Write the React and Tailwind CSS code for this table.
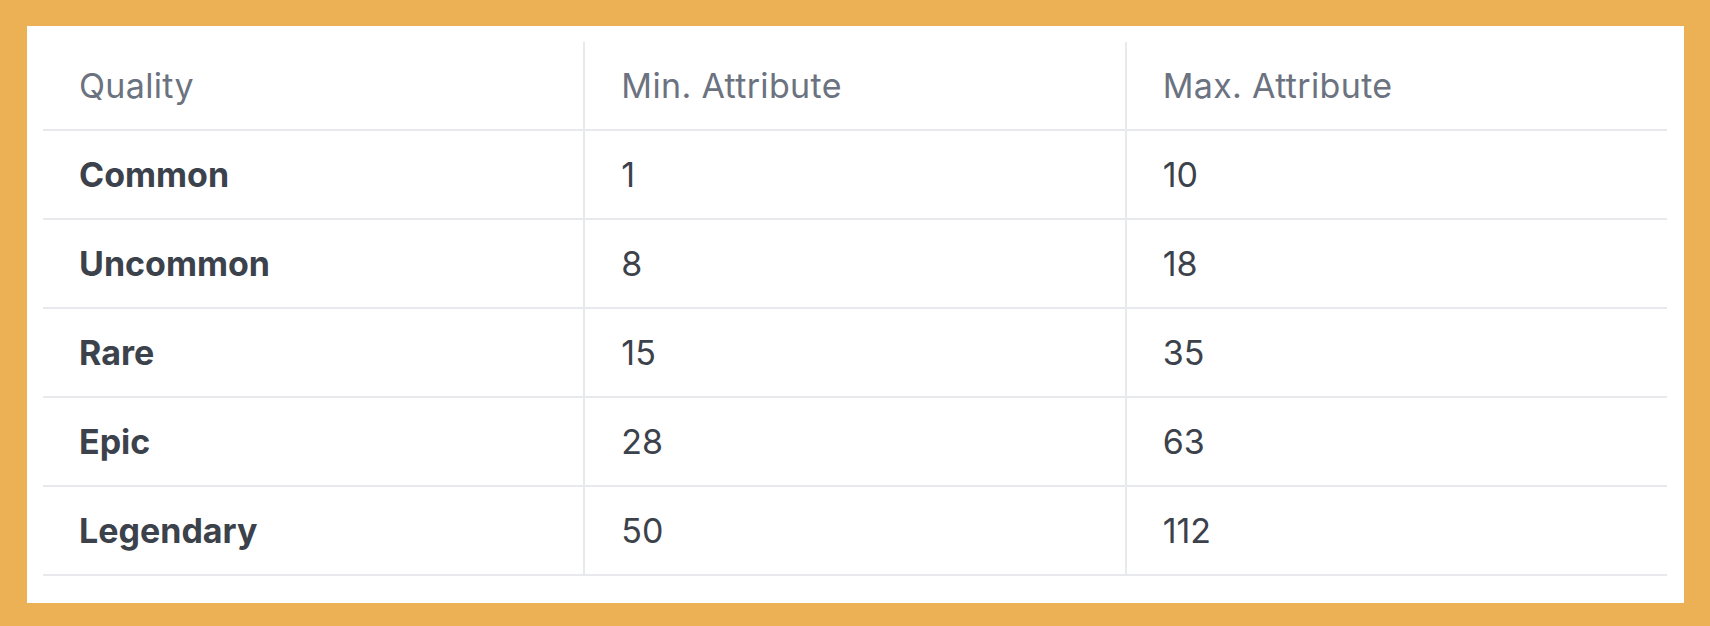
const rows = [
  { quality: 'Common', min: '1', max: '10' },
  { quality: 'Uncommon', min: '8', max: '18' },
  { quality: 'Rare', min: '15', max: '35' },
  { quality: 'Epic', min: '28', max: '63' },
  { quality: 'Legendary', min: '50', max: '112' },
];

export default function App() {
  return (
    <div className="w-[1710px] h-[626px] bg-[#edb155] pl-[27px] pt-[26px] font-['Inter',sans-serif]">
      <div className="w-[1657px] h-[577px] bg-white pl-[16px] pt-[16px] pr-[17px]">
        <table className="w-full border-collapse table-fixed">
          <thead>
            <tr className="h-[88px] border-b-2 border-[#e8e9ed]">
              <th className="text-left font-normal text-[34px] text-[#6b7280] pl-[36px] tracking-[0.01em]">Quality</th>
              <th className="text-left font-normal text-[34px] text-[#6b7280] pl-[36px] border-l-2 border-[#e8e9ed] tracking-[0.01em]">Min. Attribute</th>
              <th className="text-left font-normal text-[34px] text-[#6b7280] pl-[36px] border-l-2 border-[#e8e9ed] tracking-[0.01em]">Max. Attribute</th>
            </tr>
          </thead>
          <tbody>
            {rows.map((r) => (
              <tr key={r.quality} className="h-[89px] border-b-2 border-[#e8e9ed]">
                <td className="pl-[36px] text-[34px] font-bold text-[#3c424b]">{r.quality}</td>
                <td className="pl-[36px] text-[34px] text-[#3c424b] border-l-2 border-[#e8e9ed]">{r.min}</td>
                <td className="pl-[36px] text-[34px] text-[#3c424b] border-l-2 border-[#e8e9ed]">{r.max}</td>
              </tr>
            ))}
          </tbody>
        </table>
      </div>
    </div>
  );
}
